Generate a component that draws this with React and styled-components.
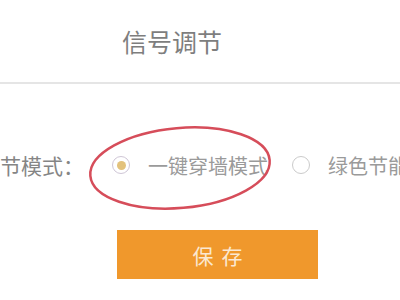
import React from 'react';
import styled, { createGlobalStyle } from 'styled-components';

const GlobalStyle = createGlobalStyle`
  html, body {
    margin: 0;
    padding: 0;
    background: #fff;
  }
  body {
    font-family: "Noto Sans CJK SC", "Noto Sans", sans-serif;
  }
`;

const Page = styled.div`
  position: relative;
  width: 400px;
  height: 300px;
  overflow: hidden;
  background: #fff;
`;

const Header = styled.div`
  height: 82px;
  display: flex;
  align-items: center;
  padding-left: 122px;
`;

const Title = styled.h2`
  margin: 0;
  font-size: 25px;
  font-weight: 400;
  line-height: 30px;
  color: #7e7e7e;
`;

const Divider = styled.div`
  height: 2px;
  background: #e5e5e5;
`;

const Form = styled.div`
  display: flex;
  flex-direction: column;
  padding-top: 66px;
`;

const Row = styled.div`
  display: flex;
  align-items: center;
  height: 30px;
  margin-left: -21px;
  white-space: nowrap;
`;

const Label = styled.span`
  font-size: 21px;
  color: #858585;
  letter-spacing: 0;
`;

const Option = styled.label`
  display: flex;
  align-items: center;
  margin-left: ${p => p.$gap}px;
`;

const Radio = styled.span`
  box-sizing: border-box;
  width: 18px;
  height: 18px;
  border-radius: 50%;
  border: 1.5px solid ${p => (p.$checked ? '#cfc6d6' : '#cbcbcb')};
  display: flex;
  align-items: center;
  justify-content: center;
  &::after {
    content: '';
    width: 9px;
    height: 9px;
    border-radius: 50%;
    background: ${p => (p.$checked ? '#e3c27c' : 'transparent')};
  }
`;

const OptionText = styled.span`
  margin-left: 18px;
  font-size: 20px;
  color: #9a9a9a;
`;

const SaveButton = styled.button`
  margin: 50px 0 0 117px;
  width: 201px;
  height: 49px;
  border: none;
  background: #f0982c;
  color: #fbe8d2;
  font-family: "Noto Sans CJK SC", sans-serif;
  font-size: 21px;
  letter-spacing: 8px;
  text-indent: 8px;
  padding: 0;
`;

const Annotation = styled.svg`
  position: absolute;
  left: 0;
  top: 0;
  pointer-events: none;
`;

export default function App() {
  return (
    <Page>
      <GlobalStyle />
      <Header>
        <Title>信号调节</Title>
      </Header>
      <Divider />
      <Form>
        <Row>
          <Label>调节模式：</Label>
          <Option $gap={28}>
            <Radio $checked />
            <OptionText>一键穿墙模式</OptionText>
          </Option>
          <Option $gap={24}>
            <Radio />
            <OptionText>绿色节能模式</OptionText>
          </Option>
        </Row>
        <SaveButton>保存</SaveButton>
      </Form>
      <Annotation width="400" height="300" viewBox="0 0 400 300">
        <ellipse
          cx="180"
          cy="168"
          rx="90"
          ry="40"
          transform="rotate(-5 180 168)"
          fill="none"
          stroke="#d64d5a"
          strokeWidth="2.5"
        />
      </Annotation>
    </Page>
  );
}
